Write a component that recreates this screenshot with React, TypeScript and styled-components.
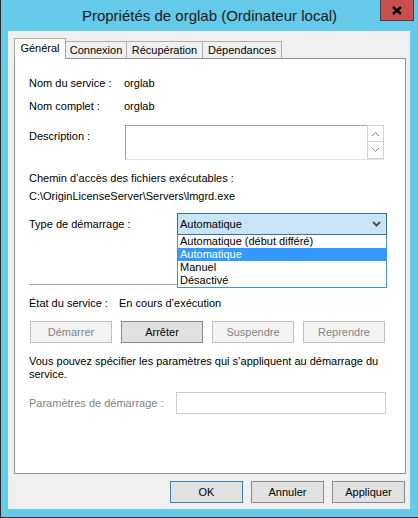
import React from "react";
import styled, { createGlobalStyle } from "styled-components";

const GlobalStyle = createGlobalStyle`
  html, body {
    margin: 0;
    padding: 0;
    background: #65c9ea;
  }
  body {
    font-family: "Liberation Sans", Arial, sans-serif;
    font-size: 11px;
    color: #000;
  }
`;

const Window = styled.div`
  width: 418px;
  height: 518px;
  box-sizing: border-box;
  background: #65c9ea;
  border-left: 1px solid #2b2b2b;
  border-bottom: 1px solid #2b2b2b;
  display: flex;
  flex-direction: column;
`;

const TitleBar = styled.div`
  height: 31px;
  flex: none;
  display: grid;
  grid-template-columns: 1fr auto 1fr;
  align-items: start;
`;

const Title = styled.div`
  grid-column: 2;
  padding-top: 6px;
  font-size: 15px;
  line-height: 20px;
  color: #1a1a1a;
  white-space: nowrap;
`;

const CloseButton = styled.div`
  grid-column: 3;
  justify-self: end;
  margin-right: 4px;
  width: 34px;
  height: 21px;
  box-sizing: border-box;
  background: #c75050;
  border: 1px solid #5a3434;
  border-top: none;
  display: flex;
  align-items: center;
  justify-content: center;
`;

const Client = styled.div`
  flex: 1;
  margin: 0 8px 8px 7px;
  background: #f0f0f0;
  padding: 7px 4px 6px 6px;
  display: flex;
  flex-direction: column;
`;

const TabStrip = styled.div`
  height: 20px;
  display: flex;
  align-items: flex-end;
  position: relative;
  z-index: 1;
`;

const Tab = styled.div<{ $w: number; $active?: boolean }>`
  width: ${(p) => p.$w}px;
  height: ${(p) => (p.$active ? 21 : 17)}px;
  margin-bottom: ${(p) => (p.$active ? -1 : 0)}px;
  box-sizing: border-box;
  background: ${(p) => (p.$active ? "#fff" : "#f0f0f0")};
  border: 1px solid ${(p) => (p.$active ? "#a8a8a8" : "#acacac")};
  border-bottom: none;
  border-left-width: ${(p) => (p.$active ? 1 : 0)}px;
  display: flex;
  align-items: center;
  justify-content: center;
  padding-bottom: ${(p) => (p.$active ? 2 : 0)}px;
  font-size: 11px;
  white-space: nowrap;
`;

const Panel = styled.div`
  height: 416px;
  box-sizing: border-box;
  background: #fff;
  border: 1px solid #8c8f96;
  padding: 18px 19px 0 14px;
  display: flex;
  flex-direction: column;
`;

const InfoRow = styled.div<{ $label: number; $gap?: number }>`
  display: grid;
  grid-template-columns: ${(p) => p.$label}px 1fr;
  align-items: center;
  margin-top: ${(p) => p.$gap ?? 0}px;
  line-height: 13px;
`;

const TopRow = styled(InfoRow)`
  align-items: start;
`;

const Label = styled.span<{ $disabled?: boolean }>`
  color: ${(p) => (p.$disabled ? "#838383" : "#000")};
  white-space: nowrap;
`;

const DescLabel = styled(Label)`
  margin-top: 5px;
`;

const TextLine = styled.div<{ $gap?: number }>`
  margin-top: ${(p) => p.$gap ?? 0}px;
  line-height: 13px;
  white-space: nowrap;
`;

const DescBox = styled.div`
  width: 259px;
  height: 35px;
  box-sizing: border-box;
  border: 1px solid;
  border-color: #a0a0a0 #e3e3e3 #e3e3e3 #a0a0a0;
  display: flex;
  justify-content: flex-end;
`;

const ScrollColumn = styled.div`
  width: 17px;
  margin-top: -1px;
  margin-right: -1px;
  display: flex;
  flex-direction: column;
`;

const ScrollButton = styled.div`
  height: 17px;
  box-sizing: border-box;
  border: 1px solid #d2d2d2;
  & + & {
    border-top: none;
  }
  display: flex;
  align-items: center;
  justify-content: center;
  background: #fff;
`;

const ComboWrap = styled.div`
  position: relative;
  width: 210px;
`;

const Combo = styled.div`
  height: 22px;
  box-sizing: border-box;
  background: #c7e5f6;
  border: 1px solid #3c6e97;
  display: flex;
  align-items: center;
  justify-content: space-between;
  padding: 0 5px 0 2px;
`;

const DropList = styled.ul`
  position: absolute;
  top: 100%;
  left: 0;
  right: 0;
  margin: 0;
  padding: 0;
  list-style: none;
  background: #fff;
  border: 1px solid #3e9bc6;
  border-top: none;
  z-index: 5;
`;

const DropItem = styled.li<{ $selected?: boolean }>`
  height: 13px;
  line-height: 13px;
  padding-left: 2px;
  background: ${(p) => (p.$selected ? "#3399ff" : "transparent")};
  color: ${(p) => (p.$selected ? "#fff" : "#000")};
  white-space: nowrap;
`;

const Separator = styled.hr`
  margin: 49px 0 0 0;
  height: 1px;
  border: none;
  background: #a0a0a0;
`;

const ButtonRow = styled.div`
  display: grid;
  grid-template-columns: repeat(4, 82px);
  column-gap: 9px;
  margin-top: 11px;
  padding-left: 1px;
`;

const Button = styled.div<{ $variant?: "disabled" | "default" | "normal" }>`
  height: 22px;
  box-sizing: border-box;
  display: flex;
  align-items: center;
  justify-content: center;
  background: ${(p) => (p.$variant === "disabled" ? "#f4f4f4" : "#e1e1e1")};
  border: 1px solid
    ${(p) =>
      p.$variant === "disabled"
        ? "#bfbfbf"
        : p.$variant === "default"
          ? "#3c7fb1"
          : "#8a8a8a"};
  color: ${(p) => (p.$variant === "disabled" ? "#838383" : "#000")};
  white-space: nowrap;
`;

const ParamInput = styled.div`
  width: 210px;
  height: 22px;
  box-sizing: border-box;
  border: 1px solid #cccccc;
  background: #fff;
`;

const Footer = styled.div`
  display: flex;
  justify-content: flex-end;
  gap: 8px;
  margin-top: 7px;
  padding-right: 1px;
`;

const FooterButton = styled(Button)`
  width: 73px;
`;

const Chevron = ({ dir, color, weight }: { dir: "up" | "down"; color: string; weight: number }) => (
  <svg width="9" height="6" viewBox="0 0 9 6">
    <polyline
      points={dir === "up" ? "1,5 4.5,1.5 8,5" : "1,1 4.5,4.5 8,1"}
      fill="none"
      stroke={color}
      strokeWidth={weight}
    />
  </svg>
);

const startupTypes = ["Automatique (début différé)", "Automatique", "Manuel", "Désactivé"];

export default function App() {
  return (
    <>
      <GlobalStyle />
      <Window>
        <TitleBar>
          <Title>Propriétés de orglab (Ordinateur local)</Title>
          <CloseButton>
            <svg width="10" height="9" viewBox="0 0 10 9">
              <path d="M1 1 L9 8 M9 1 L1 8" stroke="#000" strokeWidth="2.4" />
            </svg>
          </CloseButton>
        </TitleBar>
        <Client>
          <TabStrip>
            <Tab $w={52} $active>
              Général
            </Tab>
            <Tab $w={61}>Connexion</Tab>
            <Tab $w={76}>Récupération</Tab>
            <Tab $w={79}>Dépendances</Tab>
          </TabStrip>
          <Panel>
            <InfoRow $label={95}>
              <Label>Nom du service :</Label>
              <span>orglab</span>
            </InfoRow>
            <InfoRow $label={95} $gap={10}>
              <Label>Nom complet :</Label>
              <span>orglab</span>
            </InfoRow>
            <TopRow $label={96} $gap={12}>
              <DescLabel>Description :</DescLabel>
              <DescBox>
                <ScrollColumn>
                  <ScrollButton>
                    <Chevron dir="up" color="#8a8a8a" weight={1} />
                  </ScrollButton>
                  <ScrollButton>
                    <Chevron dir="down" color="#8a8a8a" weight={1} />
                  </ScrollButton>
                </ScrollColumn>
              </DescBox>
            </TopRow>
            <TextLine $gap={12}>Chemin d’accès des fichiers exécutables :</TextLine>
            <TextLine $gap={5}>C:\OriginLicenseServer\Servers\lmgrd.exe</TextLine>
            <InfoRow $label={148} $gap={10}>
              <Label>Type de démarrage :</Label>
              <ComboWrap>
                <Combo>
                  <span>Automatique</span>
                  <Chevron dir="down" color="#505050" weight={2} />
                </Combo>
                <DropList>
                  {startupTypes.map((t) => (
                    <DropItem key={t} $selected={t === "Automatique"}>
                      {t}
                    </DropItem>
                  ))}
                </DropList>
              </ComboWrap>
            </InfoRow>
            <Separator />
            <InfoRow $label={90} $gap={12}>
              <Label>État du service :</Label>
              <span>En cours d’exécution</span>
            </InfoRow>
            <ButtonRow>
              <Button $variant="disabled">Démarrer</Button>
              <Button $variant="normal">Arrêter</Button>
              <Button $variant="disabled">Suspendre</Button>
              <Button $variant="disabled">Reprendre</Button>
            </ButtonRow>
            <TextLine $gap={12}>
              Vous pouvez spécifier les paramètres qui s’appliquent au démarrage du
              <br />
              service.
            </TextLine>
            <InfoRow $label={147} $gap={11}>
              <Label $disabled>Paramètres de démarrage :</Label>
              <ParamInput />
            </InfoRow>
          </Panel>
          <Footer>
            <FooterButton $variant="default">OK</FooterButton>
            <FooterButton $variant="normal">Annuler</FooterButton>
            <FooterButton $variant="normal">Appliquer</FooterButton>
          </Footer>
        </Client>
      </Window>
    </>
  );
}
